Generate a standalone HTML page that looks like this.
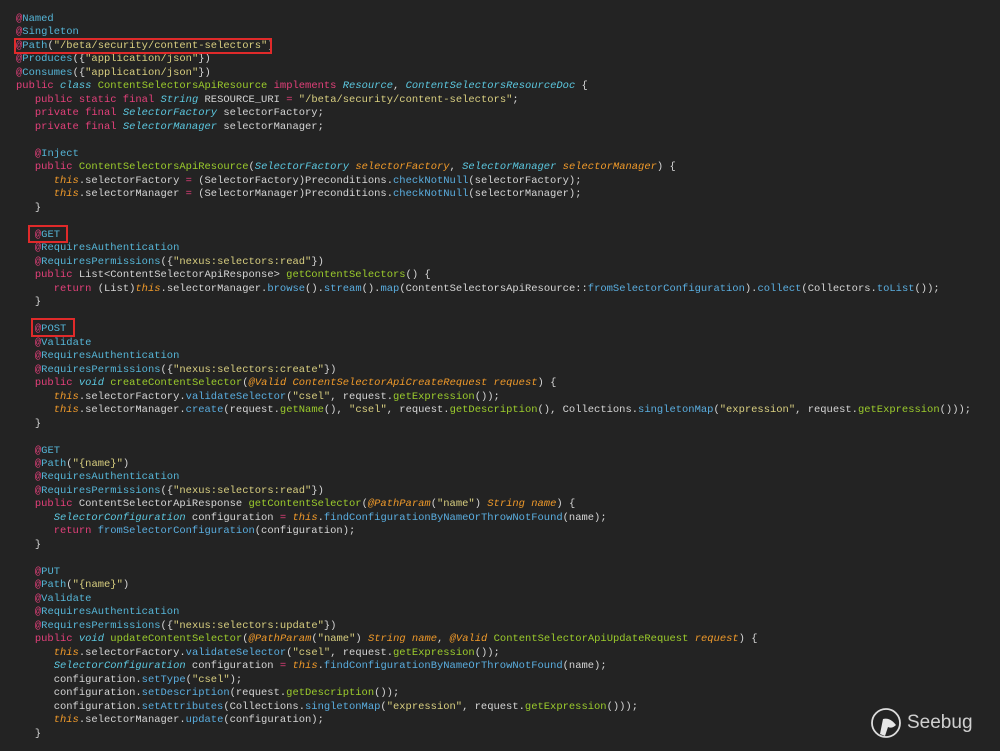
<!DOCTYPE html>
<html><head><meta charset="utf-8"><style>
html,body{margin:0;padding:0;background:#232323;width:1000px;height:751px;overflow:hidden}
pre{margin:0;position:absolute;left:16px;top:13px;font-family:"Liberation Mono",monospace;font-size:10.47px;line-height:13.49px;color:#d6d6d6;letter-spacing:0px}
.k{color:#e3407a}.t{color:#5cc8e0;font-style:italic}.a{color:#56b6d8}.at{color:#e3407a}
.s{color:#d9cf80}.th{color:#f09a2a;font-style:italic}.m{color:#5aaee0}.g{color:#9ccc2c}.p{color:#f09a2a;font-style:italic}
.box{position:absolute;border:2px solid #e02a2a;box-sizing:border-box}
</style></head><body>
<pre><span class="at">@</span><span class="a">Named</span>
<span class="at">@</span><span class="a">Singleton</span>
<span class="at">@</span><span class="a">Path</span>(<span class="s">"/beta/security/content-selectors"</span>)
<span class="at">@</span><span class="a">Produces</span>({<span class="s">"application/json"</span>})
<span class="at">@</span><span class="a">Consumes</span>({<span class="s">"application/json"</span>})
<span class="k">public</span> <span class="t">class</span> <span class="g">ContentSelectorsApiResource</span> <span class="k">implements</span> <span class="t">Resource</span>, <span class="t">ContentSelectorsResourceDoc</span> {
   <span class="k">public static final</span> <span class="t">String</span> RESOURCE_URI <span class="k">=</span> <span class="s">"/beta/security/content-selectors"</span>;
   <span class="k">private final</span> <span class="t">SelectorFactory</span> selectorFactory;
   <span class="k">private final</span> <span class="t">SelectorManager</span> selectorManager;

   <span class="at">@</span><span class="a">Inject</span>
   <span class="k">public</span> <span class="g">ContentSelectorsApiResource</span>(<span class="t">SelectorFactory</span> <span class="p">selectorFactory</span>, <span class="t">SelectorManager</span> <span class="p">selectorManager</span>) {
      <span class="th">this</span>.selectorFactory <span class="k">=</span> (SelectorFactory)Preconditions.<span class="m">checkNotNull</span>(selectorFactory);
      <span class="th">this</span>.selectorManager <span class="k">=</span> (SelectorManager)Preconditions.<span class="m">checkNotNull</span>(selectorManager);
   }

   <span class="at">@</span><span class="a">GET</span>
   <span class="at">@</span><span class="a">RequiresAuthentication</span>
   <span class="at">@</span><span class="a">RequiresPermissions</span>({<span class="s">"nexus:selectors:read"</span>})
   <span class="k">public</span> List&lt;ContentSelectorApiResponse&gt; <span class="g">getContentSelectors</span>() {
      <span class="k">return</span> (List)<span class="th">this</span>.selectorManager.<span class="m">browse</span>().<span class="m">stream</span>().<span class="m">map</span>(ContentSelectorsApiResource::<span class="m">fromSelectorConfiguration</span>).<span class="m">collect</span>(Collectors.<span class="m">toList</span>());
   }

   <span class="at">@</span><span class="a">POST</span>
   <span class="at">@</span><span class="a">Validate</span>
   <span class="at">@</span><span class="a">RequiresAuthentication</span>
   <span class="at">@</span><span class="a">RequiresPermissions</span>({<span class="s">"nexus:selectors:create"</span>})
   <span class="k">public</span> <span class="t">void</span> <span class="g">createContentSelector</span>(<span class="p">@Valid ContentSelectorApiCreateRequest request</span>) {
      <span class="th">this</span>.selectorFactory.<span class="m">validateSelector</span>(<span class="s">"csel"</span>, request.<span class="g">getExpression</span>());
      <span class="th">this</span>.selectorManager.<span class="m">create</span>(request.<span class="g">getName</span>(), <span class="s">"csel"</span>, request.<span class="g">getDescription</span>(), Collections.<span class="m">singletonMap</span>(<span class="s">"expression"</span>, request.<span class="g">getExpression</span>()));
   }

   <span class="at">@</span><span class="a">GET</span>
   <span class="at">@</span><span class="a">Path</span>(<span class="s">"{name}"</span>)
   <span class="at">@</span><span class="a">RequiresAuthentication</span>
   <span class="at">@</span><span class="a">RequiresPermissions</span>({<span class="s">"nexus:selectors:read"</span>})
   <span class="k">public</span> ContentSelectorApiResponse <span class="g">getContentSelector</span>(<span class="p">@PathParam</span>(<span class="s">"name"</span>) <span class="p">String name</span>) {
      <span class="t">SelectorConfiguration</span> configuration <span class="k">=</span> <span class="th">this</span>.<span class="m">findConfigurationByNameOrThrowNotFound</span>(name);
      <span class="k">return</span> <span class="m">fromSelectorConfiguration</span>(configuration);
   }

   <span class="at">@</span><span class="a">PUT</span>
   <span class="at">@</span><span class="a">Path</span>(<span class="s">"{name}"</span>)
   <span class="at">@</span><span class="a">Validate</span>
   <span class="at">@</span><span class="a">RequiresAuthentication</span>
   <span class="at">@</span><span class="a">RequiresPermissions</span>({<span class="s">"nexus:selectors:update"</span>})
   <span class="k">public</span> <span class="t">void</span> <span class="g">updateContentSelector</span>(<span class="p">@PathParam</span>(<span class="s">"name"</span>) <span class="p">String name</span>, <span class="p">@Valid</span> <span class="g">ContentSelectorApiUpdateRequest</span> <span class="p">request</span>) {
      <span class="th">this</span>.selectorFactory.<span class="m">validateSelector</span>(<span class="s">"csel"</span>, request.<span class="g">getExpression</span>());
      <span class="t">SelectorConfiguration</span> configuration <span class="k">=</span> <span class="th">this</span>.<span class="m">findConfigurationByNameOrThrowNotFound</span>(name);
      configuration.<span class="m">setType</span>(<span class="s">"csel"</span>);
      configuration.<span class="m">setDescription</span>(request.<span class="g">getDescription</span>());
      configuration.<span class="m">setAttributes</span>(Collections.<span class="m">singletonMap</span>(<span class="s">"expression"</span>, request.<span class="g">getExpression</span>()));
      <span class="th">this</span>.selectorManager.<span class="m">update</span>(configuration);
   }</pre>
<div class="box" style="left:14px;top:38px;width:258px;height:16px"></div>
<div class="box" style="left:28px;top:225px;width:40px;height:18px"></div>
<div class="box" style="left:31px;top:318px;width:44px;height:19px"></div>
<svg style="position:absolute;left:870px;top:707px" width="32" height="32" viewBox="0 0 32 32">
<circle cx="16" cy="16" r="14" fill="none" stroke="#ddd" stroke-width="1.8"/>
<path d="M10 27 L13 12 Q20 10 26 18 Q22 22 18 20 L15 29 Z" fill="#e6e6e6"/>
</svg>
<div style="position:absolute;left:907px;top:712px;font-family:'Liberation Sans',sans-serif;font-size:19px;color:#d0d0d0">Seebug</div>
</body></html>
